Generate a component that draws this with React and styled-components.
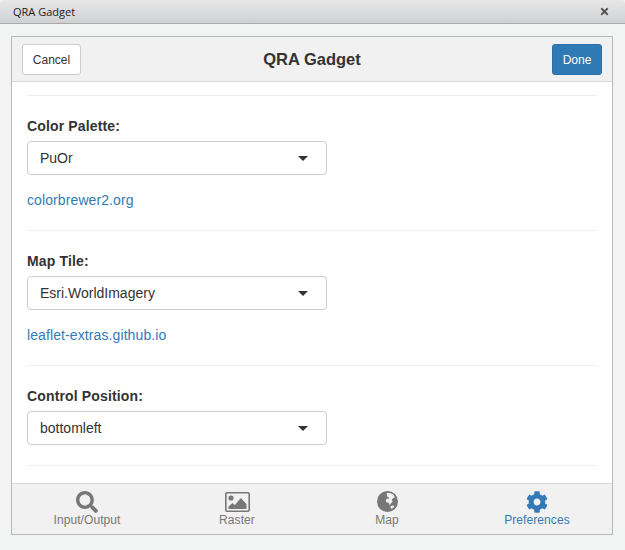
import React from "react";
import styled, { createGlobalStyle } from "styled-components";
import { FaSearch, FaCog, FaTimes } from "react-icons/fa";

const Global = createGlobalStyle`
  html, body {
    margin: 0;
    padding: 0;
    background: #ffffff;
  }
  * {
    box-sizing: border-box;
  }
`;

const PictureIcon = () => (
  <svg width="25" height="20" viewBox="0 0 25 20">
    <rect x="0.8" y="0.8" width="23.4" height="18.4" rx="1.2" fill="none" stroke="currentColor" strokeWidth="1.6" />
    <circle cx="6" cy="6" r="2.6" fill="currentColor" />
    <path d="M3.5 17v-2.5l4-3.6 2.4 2.2L15.8 6l5.7 6v5z" fill="currentColor" />
  </svg>
);

const GlobeIcon = () => (
  <svg width="21" height="21" viewBox="0 0 21 21">
    <circle cx="10.5" cy="10.5" r="10.5" fill="currentColor" />
    <path
      d="M9.5 2.2c2.4-.6 5 0 7 1.6l1.4 2.4-2 1-1.2 2 1 1.6-2 1.8-1 1.6-1-2.4-2.4-.6-.6-2.2 1.6-1.4 1.4.4.4-1.6-1.8-.6z"
      fill="#f1f1f1"
    />
    <path d="M13.5 15.2l2.2-.6 1.6.6-1.4 2-2 .6z" fill="#f1f1f1" />
  </svg>
);

const sections = [
  { label: "Color Palette:", value: "PuOr", link: "colorbrewer2.org" },
  { label: "Map Tile:", value: "Esri.WorldImagery", link: "leaflet-extras.github.io" },
  { label: "Control Position:", value: "bottomleft" },
];

const tabs = [
  { label: "Input/Output", icon: <FaSearch size={22} /> },
  { label: "Raster", icon: <PictureIcon /> },
  { label: "Map", icon: <GlobeIcon /> },
  { label: "Preferences", icon: <FaCog size={22} />, active: true },
];

export default function App() {
  return (
    <>
      <Global />
      <Window>
        <TitleBar>
          <WindowTitle>QRA Gadget</WindowTitle>
          <CloseIcon>
            <FaTimes size={11} />
          </CloseIcon>
        </TitleBar>
        <Dialog>
          <Panel>
            <Header>
              <CancelButton>Cancel</CancelButton>
              <HeaderTitle>QRA Gadget</HeaderTitle>
              <DoneButton>Done</DoneButton>
            </Header>
            <Body>
              <Rule />
              {sections.map((s) => (
                <Section key={s.label}>
                  <Label>{s.label}</Label>
                  <Select $hasLink={!!s.link}>
                    {s.value}
                    <Caret />
                  </Select>
                  {s.link && <Link>{s.link}</Link>}
                  <Rule />
                </Section>
              ))}
            </Body>
            <Footer>
              {tabs.map((t) => (
                <Tab key={t.label} $active={t.active}>
                  <TabIcon>{t.icon}</TabIcon>
                  {t.label}
                </Tab>
              ))}
            </Footer>
          </Panel>
        </Dialog>
      </Window>
    </>
  );
}

const Window = styled.div`
  width: 625px;
  height: 550px;
  display: flex;
  flex-direction: column;
  background: #f2f4f4;
  font-family: "Liberation Sans", Arial, sans-serif;
  color: #333333;
`;

const TitleBar = styled.div`
  height: 24px;
  flex: none;
  display: flex;
  align-items: center;
  justify-content: space-between;
  padding: 0 15px 1px 13px;
  background: linear-gradient(#e8e8e9, #cfd0d2);
  border-bottom: 1px solid #a9a9a9;
  border-radius: 4px 4px 0 0;
`;

const WindowTitle = styled.div`
  font-family: "Open Sans", sans-serif;
  font-size: 11px;
  color: #222222;
`;

const CloseIcon = styled.div`
  display: flex;
  color: #555555;
`;

const Dialog = styled.div`
  flex: 1;
  padding: 12px 12px 15px 11px;
  display: flex;
`;

const Panel = styled.div`
  flex: 1;
  display: flex;
  flex-direction: column;
  border: 1px solid #b8b8b8;
  background: #ffffff;
`;

const Header = styled.div`
  height: 45px;
  flex: none;
  display: grid;
  grid-template-columns: 1fr auto 1fr;
  align-items: center;
  padding: 0 10px;
  background: #f1f1f1;
  border-bottom: 1px solid #d8d8d8;
`;

const HeaderTitle = styled.div`
  font-size: 16.5px;
  font-weight: bold;
  color: #333333;
  padding-top: 1px;
`;

const CancelButton = styled.div`
  height: 31px;
  width: 59px;
  display: flex;
  align-items: center;
  justify-content: center;
  padding-top: 1px;
  font-size: 12px;
  color: #333333;
  background: #ffffff;
  border: 1px solid #cccccc;
  border-radius: 3px;
`;

const DoneButton = styled(CancelButton)`
  width: 50px;
  justify-self: end;
  color: #ffffff;
  background: #2e7ab5;
  border-color: #2b6fa6;
`;

const Body = styled.div`
  flex: 1;
  padding: 13px 15px 0;
  background: #ffffff;
  overflow: hidden;
`;

const Rule = styled.div`
  height: 1px;
  background: #eeeeee;
`;

const Section = styled.div`
  padding-top: 22px;
`;

const Label = styled.div`
  font-size: 14px;
  font-weight: bold;
  line-height: 16px;
  letter-spacing: 0.15px;
  margin-bottom: 7px;
`;

const Select = styled.div`
  width: 300px;
  height: 34px;
  display: flex;
  align-items: center;
  justify-content: space-between;
  padding: 0 18px 0 12px;
  font-size: 14px;
  color: #333333;
  background: #ffffff;
  border: 1px solid #cccccc;
  border-radius: 4px;
  margin-bottom: ${({ $hasLink }) => ($hasLink ? "17px" : "20px")};
`;

const Caret = styled.span`
  width: 0;
  height: 0;
  border-left: 5px solid transparent;
  border-right: 5px solid transparent;
  border-top: 5px solid #333333;
`;

const Link = styled.div`
  font-size: 14px;
  line-height: 16px;
  letter-spacing: 0.1px;
  color: #337ab7;
  margin-bottom: 22px;
`;

const Footer = styled.div`
  height: 51px;
  flex: none;
  display: grid;
  grid-template-columns: repeat(4, 150px);
  background: #f1f1f1;
  border-top: 1px solid #d8d8d8;
`;

const Tab = styled.div`
  display: flex;
  flex-direction: column;
  align-items: center;
  padding-top: 6px;
  font-size: 12px;
  letter-spacing: 0.08px;
  color: ${({ $active }) => ($active ? "#337ab7" : "#777777")};
`;

const TabIcon = styled.div`
  height: 23px;
  display: flex;
  align-items: center;
  justify-content: center;
`;
